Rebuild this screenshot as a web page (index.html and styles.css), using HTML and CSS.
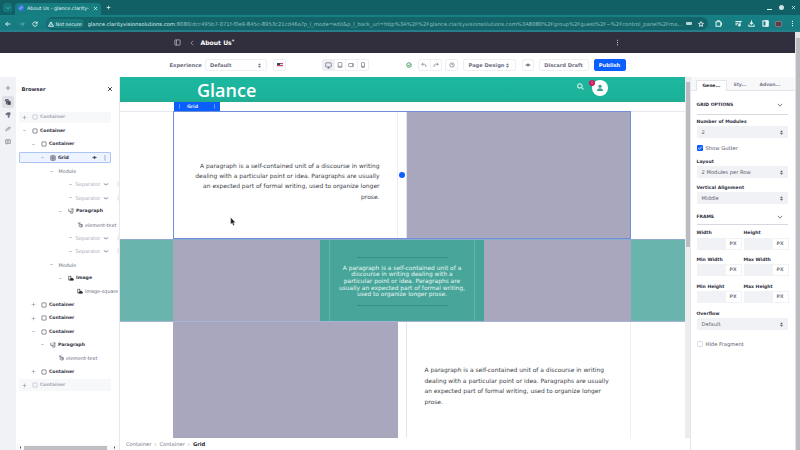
FILE: index.html
```html
<!DOCTYPE html>
<html lang="en">
<head>
<meta charset="utf-8">
<title>About Us - Page editor</title>
<link rel="stylesheet" href="styles.css">
</head>
<body>
<svg class="sprite" aria-hidden="true">
  <symbol id="plus" viewBox="0 0 8 8"><path d="M4 1v6M1 4h6"/></symbol>
  <symbol id="minus" viewBox="0 0 8 8"><path d="M2 4h4"/></symbol>
  <symbol id="close" viewBox="0 0 8 8"><path d="M1.5 1.5l5 5M6.5 1.5l-5 5"/></symbol>
  <symbol id="box" viewBox="0 0 8 8"><rect x="1.2" y="1.2" width="5.6" height="5.6" rx=".6"/></symbol>
  <symbol id="gridicon" viewBox="0 0 8 8"><rect x="1" y="1" width="6" height="6" rx=".6"/><path d="M3 1v6M5 1v6M1 4h6"/></symbol>
  <symbol id="para" viewBox="0 0 8 8"><path d="M1 1v3.5h2M3.5 1.3h3.8M6.5 1v5.8H3.6V4h2"/></symbol>
  <symbol id="txt" viewBox="0 0 8 8"><path d="M1 1.4h4M3 1.4v5.2M4 3.3h3v3.2H4M4.8 4.9H7"/></symbol>
  <symbol id="img" viewBox="0 0 8 8"><path d="M1 1v5.8h6.2"/><path d="M2.600 6.700L4 3.600l1.300 1.200.8-.8 1.300 2.700z" fill="currentColor"/><circle cx="3.200" cy="2.200" r=".6" fill="currentColor"/></symbol>
  <symbol id="eye" viewBox="0 0 8 8"><path d="M.8 4Q4 .9 7.200 4 4 7.100.8 4z"/><circle cx="4" cy="4" r="1.100" fill="currentColor"/></symbol>
  <symbol id="hidden" viewBox="0 0 8 8"><path d="M1 3.400q3 2.700 6 0M2 4.600l-.5.7M4 5v.8M6 4.600l.5.7"/></symbol>
  <symbol id="dots" viewBox="0 0 8 8"><path d="M4 .8v1.400M4 3.300v1.400M4 5.800v1.400"/></symbol>
  <symbol id="updown" viewBox="0 0 8 8"><path d="M1.700 3.400L4 .5l2.300 2.900zM1.700 4.600L4 7.500l2.300-2.900z" fill="currentColor" stroke="none"/></symbol>
  <symbol id="down" viewBox="0 0 8 8"><path d="M1 2.500l3 3 3-3"/></symbol>
  <symbol id="back" viewBox="0 0 8 8"><path d="M7.200 4H1M3.800 1.200L1 4l2.800 2.800"/></symbol>
  <symbol id="fwd" viewBox="0 0 8 8"><path d="M.8 4H7M4.200 1.200L7 4 4.200 6.800"/></symbol>
  <symbol id="reload" viewBox="0 0 8 8"><path d="M6.600 2.700A2.900 2.900 0 1 0 6.900 4.600M7 .8v2.300H4.700"/></symbol>
  <symbol id="warn" viewBox="0 0 8 8"><path d="M4 1.200L7.400 7H.6zM4 3.200v1.800M4 5.700v.5"/></symbol>
  <symbol id="star" viewBox="0 0 8 8"><path d="M4 .8l1 2.200 2.300.2-1.800 1.600.6 2.400L4 6 1.900 7.200l.6-2.400L.7 3.200 3 3z"/></symbol>
  <symbol id="ext" viewBox="0 0 8 8"><path d="M1.200 2h1.900V1h1.800v1h1.700v5.100H1.200zM6.600 3.700h.9v1.600h-.9"/></symbol>
  <symbol id="list" viewBox="0 0 8 8"><path d="M.5 1.600h4.600M.5 3.600h3.600M.5 5.400h2M5.800 6V1.600h1.800"/><circle cx="5" cy="6" r=".9" fill="currentColor"/></symbol>
  <symbol id="dl" viewBox="0 0 8 8"><path d="M4 .6v4M2.200 3L4 4.800 5.800 3M1 5v2.100h6V5"/></symbol>
  <symbol id="panel" viewBox="0 0 8 8"><rect x="1" y="1" width="6" height="6" rx=".5"/><path d="M4.600 1.300h2.200v5.400H4.600z" fill="currentColor"/></symbol>
  <symbol id="sidebar" viewBox="0 0 8 8"><rect x="1" y="1" width="6" height="6" rx=".5"/><path d="M2.800 1v6"/></symbol>
  <symbol id="left" viewBox="0 0 8 8"><path d="M5.500 1l-3 3 3 3"/></symbol>
  <symbol id="desktop" viewBox="0 0 8 8"><rect x=".8" y="1" width="6.400" height="4.600" rx=".6"/><path d="M2.700 7h2.600M4 5.600V7"/></symbol>
  <symbol id="tablet" viewBox="0 0 8 8"><rect x="1.400" y=".8" width="5.200" height="6.400" rx=".7"/><path d="M1.400 5.800h5.200"/></symbol>
  <symbol id="land" viewBox="0 0 8 8"><rect x=".8" y="2" width="6.400" height="4.200" rx=".7"/><path d="M5.900 2v4"/></symbol>
  <symbol id="phone" viewBox="0 0 8 8"><rect x="2" y=".8" width="4" height="6.400" rx=".7"/><path d="M2 5.900h4"/></symbol>
  <symbol id="okay" viewBox="0 0 8 8"><circle cx="4" cy="4" r="3"/><path d="M2.500 4l1.200 1.200 2.200-2.400"/></symbol>
  <symbol id="undo" viewBox="0 0 8 8"><path d="M3 1L1 3l2 2M1 3h3.600q2.200 0 2.200 3.600"/></symbol>
  <symbol id="redo" viewBox="0 0 8 8"><path d="M5 1l2 2-2 2M7 3H3.400Q1.200 3 1.200 6.600"/></symbol>
  <symbol id="clock" viewBox="0 0 8 8"><circle cx="4" cy="4" r="2.900"/><path d="M4 2.200V4h1.300"/></symbol>
  <symbol id="tree" viewBox="0 0 8 8"><path d="M.8 1h3.600v1.800H.8zM2.200 3v3.700h2M2.200 4.200h2M4.200 3.500h3v1.300h-3zM4.200 6h3v1.200h-3z"/></symbol>
  <symbol id="brush" viewBox="0 0 8 8"><path d="M1 2.600L3.200.9h3.600v2.800H3.400L1.600 3.900zM4.200 3.700h1.300v3.500H4.200z" fill="currentColor"/></symbol>
  <symbol id="link" viewBox="0 0 8 8"><path d="M3.300 4.800L2.200 6.600Q.6 6.400 1.300 4.800L3 3q1.400-.6 1.800.6M3.600 4.400Q4.800 5.500 5.700 4.200L7 2.500Q7 .9 5.400 1.200L4.300 2.400"/></symbol>
  <symbol id="comment" viewBox="0 0 8 8"><path d="M.9 1h6.200v4.800H3.600L2.200 7.100V5.800H.9zM2.400 2.700h3.200M2.400 4.100h2.300"/></symbol>
  <symbol id="search" viewBox="0 0 8 8"><circle cx="3.300" cy="3.300" r="2.500"/><path d="M5.100 5.100l2.300 2.300"/></symbol>
  <symbol id="user" viewBox="0 0 8 8"><circle cx="4" cy="2.300" r="1.600" fill="currentColor" stroke="none"/><path d="M1 7q0-2.800 3-2.800T7 7z" fill="currentColor" stroke="none"/></symbol>
</svg>

<header class="chrome">
  <div class="tabbar">
    <span class="tab-search"><svg class="i s4"><use href="#down"/></svg></span>
    <div class="tab"><span class="favicon"><svg class="i s4"><use href="#link"/></svg></span><span class="tab-title">About Us - glance.clarity-</span><svg class="i s5 bold"><use href="#close"/></svg></div>
    <svg class="i s5 bold newtab"><use href="#plus"/></svg>
    <div class="win"><span class="minimize"></span><span class="restore"></span><svg class="i s5 bold"><use href="#close"/></svg></div>
  </div>
  <div class="address">
    <svg class="i s6 bold"><use href="#back"/></svg>
    <svg class="i s6 dim"><use href="#fwd"/></svg>
    <svg class="i s6 bold"><use href="#reload"/></svg>
    <div class="omnibox">
      <span class="secure"><svg class="i s6 bold"><use href="#warn"/></svg>Not secure</span>
      <span class="url"><b>glance.clarityvisionsolutions.com</b>:8080/dcc495b7-071f-f0e9-845c-8953c21cd46a?p_l_mode=edit&amp;p_l_back_url=http%3A%2F%2Fglance.clarityvisionsolutions.com%3A8080%2Fgroup%2Fguest%2F~%2Fcontrol_panel%2Fma...</span>
      <span class="key"></span>
      <svg class="i s6 bold"><use href="#star"/></svg>
    </div>
    <div class="actions">
      <svg class="i s7 bold"><use href="#ext"/></svg>
      <svg class="i s7 bold media"><use href="#list"/></svg>
      <svg class="i s7 bold"><use href="#dl"/></svg>
      <svg class="i s7 bold"><use href="#panel"/></svg>
      <span class="profile"></span>
      <svg class="i s7 bold"><use href="#dots"/></svg>
    </div>
  </div>
</header>

<div class="page">
  <div class="app">
    <div class="titlebar">
      <svg class="i s7"><use href="#sidebar"/></svg>
      <svg class="i s6 chevron"><use href="#left"/></svg>
      <h1>About Us<sup>*</sup></h1>
      <svg class="i s7 more bold"><use href="#dots"/></svg>
    </div>
    <div class="toolbar">
      <span class="exp">Experience</span>
      <span class="btn select">Default<svg class="i s5"><use href="#updown"/></svg></span>
      <span class="btn lang"><span class="flag"></span></span>
      <div class="group devices"><span class="on"><svg class="i s7"><use href="#desktop"/></svg></span><span><svg class="i s6"><use href="#tablet"/></svg></span><span><svg class="i s6"><use href="#land"/></svg></span><span><svg class="i s6"><use href="#phone"/></svg></span></div>
      <svg class="i s6 status bold"><use href="#okay"/></svg>
      <div class="group history"><span><svg class="i s6"><use href="#undo"/></svg></span><span><svg class="i s6"><use href="#redo"/></svg></span></div>
      <span class="btn sq"><svg class="i s6"><use href="#clock"/></svg></span>
      <span class="btn design">Page Design<svg class="i s5"><use href="#updown"/></svg></span>
      <span class="btn sq eyebtn"><svg class="i s6"><use href="#eye"/></svg></span>
      <span class="btn discard">Discard Draft</span>
      <span class="btn publish">Publish</span>
    </div>

    <div class="workspace">
      <nav class="rail">
        <span><svg class="i s6"><use href="#plus"/></svg></span>
        <span class="on"><svg class="i s6 bold"><use href="#tree"/></svg></span>
        <span><svg class="i s6"><use href="#brush"/></svg></span>
        <span><svg class="i s6"><use href="#link"/></svg></span>
        <span><svg class="i s6"><use href="#comment"/></svg></span>
      </nav>

      <aside class="browser">
        <div class="browser-head"><h2>Browser</h2><svg class="i s6 bold"><use href="#close"/></svg></div>
        <ul class="tree">
          <li class="l0 muted shade"><svg class="i s5"><use href="#plus"/></svg><svg class="i s6 ic"><use href="#box"/></svg>Container</li>
          <li class="l0"><svg class="i s5"><use href="#minus"/></svg><svg class="i s6 ic"><use href="#box"/></svg>Container</li>
          <li class="l1"><svg class="i s5"><use href="#minus"/></svg><svg class="i s6 ic"><use href="#box"/></svg>Container</li>
          <li class="l2 selected"><svg class="i s5"><use href="#minus"/></svg><svg class="i s6 ic"><use href="#gridicon"/></svg>Grid<svg class="i s5 seleye"><use href="#eye"/></svg><svg class="i s6 seldots"><use href="#dots"/></svg></li>
          <li class="l3 plain"><svg class="i s5"><use href="#minus"/></svg><span class="module">Module</span></li>
          <li class="l5 muted"><svg class="i s5"><use href="#minus"/></svg><span class="sep">Separator</span><svg class="i s6 hid"><use href="#hidden"/></svg><svg class="i s6 edge"><use href="#dots"/></svg></li>
          <li class="l5 muted"><svg class="i s5"><use href="#minus"/></svg><span class="sep">Separator</span><svg class="i s6 hid"><use href="#hidden"/></svg><svg class="i s6 edge"><use href="#dots"/></svg></li>
          <li class="l4"><svg class="i s5"><use href="#minus"/></svg><svg class="i s6 ic"><use href="#para"/></svg>Paragraph</li>
          <li class="l5 plain"><i class="gap"></i><svg class="i s6 ic"><use href="#txt"/></svg>element-text</li>
          <li class="l5 muted"><svg class="i s5"><use href="#minus"/></svg><span class="sep">Separator</span><svg class="i s6 hid"><use href="#hidden"/></svg><svg class="i s6 edge"><use href="#dots"/></svg></li>
          <li class="l5 muted"><svg class="i s5"><use href="#minus"/></svg><span class="sep">Separator</span><svg class="i s6 hid"><use href="#hidden"/></svg><svg class="i s6 edge"><use href="#dots"/></svg></li>
          <li class="l3 plain"><svg class="i s5"><use href="#minus"/></svg><span class="module">Module</span></li>
          <li class="l4"><svg class="i s5"><use href="#minus"/></svg><svg class="i s6 ic dark"><use href="#img"/></svg>Image</li>
          <li class="l5 plain"><i class="gap"></i><svg class="i s6 ic dark"><use href="#img"/></svg>image-square</li>
          <li class="l1"><svg class="i s5"><use href="#plus"/></svg><svg class="i s6 ic"><use href="#box"/></svg>Container</li>
          <li class="l1"><svg class="i s5"><use href="#plus"/></svg><svg class="i s6 ic"><use href="#box"/></svg>Container</li>
          <li class="l1"><svg class="i s5"><use href="#minus"/></svg><svg class="i s6 ic"><use href="#box"/></svg>Container</li>
          <li class="l2"><svg class="i s5"><use href="#minus"/></svg><svg class="i s6 ic"><use href="#para"/></svg>Paragraph</li>
          <li class="l3 plain"><i class="gap"></i><svg class="i s6 ic"><use href="#txt"/></svg>element-text</li>
          <li class="l1"><svg class="i s5"><use href="#plus"/></svg><svg class="i s6 ic"><use href="#box"/></svg>Container</li>
          <li class="l0 muted shade"><svg class="i s5"><use href="#plus"/></svg><svg class="i s6 ic"><use href="#box"/></svg>Container</li>
        </ul>
        <div class="hscroll"><i class="arr l"></i><i class="thumb"></i><i class="arr r"></i></div>
      </aside>

      <main class="canvas">
        <div class="site-head">
          <span class="logo">Glance</span>
          <svg class="i s7 bold find"><use href="#search"/></svg>
          <span class="avatar"><svg class="i s8"><use href="#user"/></svg><span class="badge">1</span></span>
        </div>
        <div class="tagrow"><span class="tag"><svg class="i s5 bold"><use href="#dots"/></svg><b>Grid</b><svg class="i s5 bold"><use href="#dots"/></svg></span></div>
        <section class="row first">
          <div class="grid-box">
            <div class="module-text"><p>A paragraph is a self-contained unit of a discourse in writing<br>dealing with a particular point or idea. Paragraphs are usually<br>an expected part of formal writing, used to organize longer<br>prose.</p></div>
            <div class="gutter"><span class="handle"></span></div>
            <div class="module-image"></div>
          </div>
          <svg class="cursor" viewBox="0 0 6 9"><path d="M.7.5v6.700l1.500-1.300 1 2.500 1.200-.5-1-2.300h2z"/></svg>
        </section>
        <section class="band">
          <div class="cell"></div>
          <div class="callout"><div class="callout-in"><hr><p>A paragraph is a self-contained unit of a<br>discourse in writing dealing with a<br>particular point or idea. Paragraphs are<br>usually an expected part of formal writing,<br>used to organize longer prose.</p><hr></div></div>
          <div class="cell"></div>
        </section>
        <section class="row third">
          <div class="module-image"></div>
          <div class="gutter"></div>
          <div class="module-text"><p>A paragraph is a self-contained unit of a discourse in writing<br>dealing with a particular point or idea. Paragraphs are usually<br>an expected part of formal writing, used to organize longer<br>prose.</p></div>
        </section>
        <footer class="crumbs"><span>Container</span><em>›</em><span>Container</span><em>›</em><b>Grid</b></footer>
      </main>
      <div class="canvas-scroll"><i></i></div>

      <aside class="props">
        <div class="tabs"><span class="on">Gene...</span><span>Sty...</span><span>Advan...</span></div>
        <div class="props-body">
          <h3 class="first-h">GRID OPTIONS<svg class="i s6"><use href="#down"/></svg></h3>
          <label>Number of Modules</label>
          <div class="field">2<svg class="i s5"><use href="#updown"/></svg></div>
          <div class="check"><span class="box on"><svg class="i s6"><path d="M1.200 3l1.300 1.300L4.800 1.700"/></svg></span>Show Gutter</div>
          <label>Layout</label>
          <div class="field">2 Modules per Row<svg class="i s5"><use href="#updown"/></svg></div>
          <label class="valign">Vertical Alignment</label>
          <div class="field">Middle<svg class="i s5"><use href="#updown"/></svg></div>
          <h3 class="frame">FRAME<svg class="i s6"><use href="#down"/></svg></h3>
          <div class="dims">
            <div><label>Width</label><div class="unit"><i></i><b>PX</b></div></div>
            <div><label>Height</label><div class="unit"><i></i><b>PX</b></div></div>
            <div><label>Min Width</label><div class="unit"><i></i><b>PX</b></div></div>
            <div><label>Max Width</label><div class="unit"><i></i><b>PX</b></div></div>
            <div><label>Min Height</label><div class="unit"><i></i><b>PX</b></div></div>
            <div><label>Max Height</label><div class="unit"><i></i><b>PX</b></div></div>
          </div>
          <label>Overflow</label>
          <div class="field">Default<svg class="i s5"><use href="#updown"/></svg></div>
          <div class="check hide"><span class="box"></span>Hide Fragment</div>
        </div>
      </aside>
    </div>
  </div>
  <div class="page-scroll"><i></i></div>
</div>
</body>
</html>
```
FILE: styles.css
```css
* { box-sizing: border-box; }
body {
  margin: 0;
  width: 800px;
  height: 450px;
  overflow: hidden;
  display: flex;
  flex-direction: column;
  background: #fff;
  color: #30313f;
  font: 5.4px/8px "DejaVu Sans", sans-serif;
}
h1, h2, h3, p, ul { margin: 0; padding: 0; }
.sprite { position: absolute; width: 0; height: 0; }
.i { fill: none; stroke: currentColor; stroke-width: .85; flex: none; display: block; }
.i.bold { stroke-width: 1.2; }
.s4 { width: 4px; height: 4px; }
.s5 { width: 5px; height: 5px; }
.s6 { width: 6px; height: 6px; }
.s7 { width: 7px; height: 7px; }
.s8 { width: 8px; height: 8px; }

/* browser chrome */
.chrome { flex: none; height: 32px; color: #e4f3f3; }
.tabbar { height: 15px; background: #116066; display: flex; align-items: center; padding-left: 3px; }
.tab-search { width: 9px; height: 9px; border-radius: 3px; background: #14777c; display: grid; place-items: center; }
.tab { width: 86px; height: 12px; margin: 3px 0 0 3px; padding: 0 3px 2px; border-radius: 4px 4px 0 0; background: #167d81; display: flex; align-items: center; }
.favicon { flex: none; width: 6px; height: 6px; border-radius: 2px; background: #3476dc; display: grid; place-items: center; }
.tab-title { margin-left: 3px; width: 66px; white-space: nowrap; overflow: hidden; font-size: 4.900px; }
.newtab { margin-left: 5px; }
.win { margin-left: auto; padding-right: 4px; display: flex; align-items: center; gap: 7px; }
.minimize { width: 5px; height: 1px; margin-top: 4px; background: #e4f3f3; }
.restore { width: 5px; height: 5px; border-radius: 3px; background: #cbe3e3; }
.address { height: 17px; background: linear-gradient(#178084, #167b80 80%, #2b7f8d); display: flex; align-items: center; padding-left: 5px; gap: 7.5px; }
.dim { opacity: .5; }
.omnibox { flex: none; width: 662px; height: 13px; border-radius: 7px; background: #126468; display: flex; align-items: center; padding: 0 5px 0 1px; }
.secure { flex: none; width: 37px; height: 9px; margin-right: 4px; border-radius: 5px; background: #17787c; display: flex; align-items: center; gap: 2px; padding-left: 1px; font-size: 4.900px; white-space: nowrap; }
.url { flex: none; width: 596px; overflow: hidden; white-space: nowrap; color: #8fbec0; font-size: 5.270px; }
.url b { font-weight: 400; color: #d9eeee; }
.key { width: 6px; height: 3px; margin: 0 6px 0 2px; border-radius: 1px; background: #b5d5d6; flex: none; }
.actions { display: flex; align-items: center; gap: 6.500px; }
.media { margin-left: 6px; }
.profile { width: 7px; height: 6px; background: #50404d; border: 1px solid #8b7378; border-radius: 1px; }

.page { flex: 1; display: flex; min-height: 0; }
.app { width: 795px; display: flex; flex-direction: column; min-height: 0; }
.page-scroll { width: 5px; background: #e4e4e6; padding: 6px .5px 0; }
.page-scroll i { display: block; height: 100%; background: #bcbcc0; }

/* title and toolbar */
.titlebar { flex: none; height: 21px; background: #312f3e; color: #bdbcc7; display: flex; align-items: center; padding-left: 173.500px; }
.chevron { margin-left: 8px; }
.titlebar h1 { margin-left: 6px; font-size: 6.100px; line-height: 8px; color: #fff; width: 37px; white-space: nowrap; }
.titlebar sup { font-size: 5px; line-height: 0; vertical-align: 2px; }
.more { margin-left: 376px; }
.toolbar { flex: none; height: 24px; display: flex; align-items: center; color: #6b6c7e; font-weight: 700; white-space: nowrap; }
.exp { margin-left: 169.500px; width: 35.500px; font-size: 5.200px; }
.btn { height: 12px; border: 1px solid #eeeff3; border-radius: 2px; display: flex; align-items: center; justify-content: center; font-size: 5.150px; }
.select { width: 62px; padding: 0 4px; justify-content: space-between; }
.lang { margin-left: 6px; width: 13px; }
.flag { width: 6px; height: 4px; background: linear-gradient(#34457e, #34457e) 0 0 / 3px 2px no-repeat, repeating-linear-gradient(#c9465a 0 1px, #f2dada 1px 2px); }
.group { display: flex; height: 12px; border: 1px solid #eeeff3; border-radius: 2px; }
.group span { flex: 1; display: grid; place-items: center; border-left: 1px solid #f1f2f5; }
.group span:first-child { border-left: 0; }
.group .on { background: #eeeff2; }
.devices { margin-left: 36px; width: 47px; }
.status { margin-left: 37px; color: #3d9a62; }
.history { margin-left: 6px; width: 24px; }
.sq { width: 13px; margin-left: 3px; }
.design { width: 53px; margin-left: 5px; gap: 1px; }
.eyebtn { margin-left: 6px; width: 12px; }
.discard { margin-left: 4.500px; width: 50px; }
.publish { margin-left: 5px; width: 32px; border-color: #0b5fff; background: #0b5fff; color: #fff; }

.workspace { flex: 1; display: flex; min-height: 0; }
.rail { width: 16px; background: #f1f2f5; padding-top: 5.500px; color: #6b6c7e; }
.rail span { width: 12px; height: 11.500px; margin: 0 0 2px 2px; border-radius: 2px; display: grid; place-items: center; }
.rail .on { background: #dfe0e5; color: #393a4a; }

/* browser tree */
.browser { width: 104px; border-right: 1px solid #e7e8ef; display: flex; flex-direction: column; overflow: hidden; position: relative; }
.browser-head { height: 33.800px; padding: 8px 6px 0 5.500px; display: flex; justify-content: space-between; }
.browser-head h2 { font-size: 5.200px; line-height: 8px; }
.browser-head .i { margin-top: 1px; }
.tree { list-style: none; flex: 1; }
.tree li { height: 13.380px; display: flex; align-items: center; position: relative; white-space: nowrap; font-weight: 700; font-size: 4.600px; }
.tree li > .i:first-child { color: #8b8c9b; }
.ic { margin: 0 2px 0 5.500px; color: #4e4f60; }
.l0 { padding-left: 5.500px; }
.l1 { padding-left: 14.500px; }
.l2 { padding-left: 23.500px; }
.l3 { padding-left: 32.500px; }
.l4 { padding-left: 41.500px; }
.tree .l5 { padding-left: 51.500px; }
.tree .muted { color: #a9aab6; }
.tree .muted .ic { color: #b9bac4; }
.tree .shade { background: #f7f8fa; width: 92px; height: 11.400px; margin: 1px 0 1px 3px; padding-left: 2.500px; }
.tree .plain { font-weight: 400; color: #6b6c7e; font-size: 4.850px; }
.tree .plain .ic { margin-left: 4.500px; }
.tree .selected { width: 92px; height: 11.400px; margin: 1px 0 1px 3px; padding-left: 19.500px; background: #edf3ff; border: 1px solid #abc4f4; border-radius: 1px; }
.tree .dark { color: #272833; }
.gap { width: 5px; }
.module { margin-left: 5px; }
.sep { margin-left: 3px; width: 27px; font-weight: 400; font-size: 5.050px; }
.hid { margin-left: 3px; color: #77788a; }
.edge { margin-left: 6px; }
.seleye { margin-left: auto; }
.seldots { margin: 0 2px 0 5px; }
.hscroll { height: 5px; background: #fafafb; display: flex; align-items: center; padding: 0 2px; gap: 3px; }
.thumb { flex: 1; height: 4px; background: #bfbfc3; margin: 0 4px 0 0; }
.arr { border: 1.500px solid transparent; width: 3px; height: 3px; }
.arr.l { border-right-color: #555; border-left: 0; }
.arr.r { border-left-color: #555; border-right: 0; }

/* page canvas */
.canvas { width: 565px; display: flex; flex-direction: column; }
.site-head { height: 25px; background: linear-gradient(#1db79f, #1bb39a 85%, #25ab92); display: flex; align-items: center; padding-left: 77px; color: #fff; }
.logo { width: 380px; font: 600 18px/20px "Open Sans", sans-serif; }
.find { margin-bottom: 7px; color: #d5f3ec; }
.avatar { width: 16px; height: 16px; margin: 0 0 3px 8px; border-radius: 8px; background: #fff; color: #35a28f; display: grid; place-items: center; position: relative; }
.badge { position: absolute; left: -3px; top: 0; width: 6px; height: 6px; border-radius: 3px; background: #cc1857; color: #f0b5ca; font-size: 4px; line-height: 6px; text-align: center; }
.tagrow { height: 9px; padding-left: 53.500px; }
.tag { width: 46px; height: 9px; background: #0b5fff; color: #dce7ff; display: flex; align-items: center; justify-content: space-between; padding: 0 3px; font-size: 4.700px; }
.tag b { margin-right: 8px; }
.row { border-top: 1px solid #e7e8ef; padding: 0 54px 0 53px; }
.first { height: 128px; position: relative; }
.grid-box { height: 128px; margin-top: -1px; border: 1.500px solid #6f8fdc; display: flex; }
.module-text p { color: #3a3b45; font-size: 5.960px; line-height: 10.400px; white-space: nowrap; }
.first .module-text { width: 224px; border-right: 1px solid #eeeff6; padding: 48.500px 17.500px 0 0; }
.first .module-text p { text-align: right; }
.gutter { width: 9px; border-right: 1px solid #e3e6f2; display: grid; place-items: center; }
.first .module-image { flex: 1; }
.module-image { background: #a8a7bd; }
.handle { width: 6px; height: 6px; border-radius: 3px; background: #0b5fff; }
.cursor { position: absolute; left: 110px; top: 105px; width: 6px; height: 9px; fill: #191919; stroke: #ddd; stroke-width: .4; }
.band { height: 83px; padding: 0 54px 0 53px; background: #6ab4ae; display: flex; border-top: 1px solid #8eabc9; border-bottom: 1px solid #a9b3d5; }
.cell { width: 147px; background: #a8a7bd; }
.callout { width: 164px; background: #48a59a; padding: 0 9px; }
.callout-in { height: 100%; padding-top: 16.500px; border: solid #66b3a9; border-width: 0 1px; text-align: center; color: #e4f5f2; }
.callout hr { width: 91px; height: 1.500px; margin: 0 auto; border: 0; background: #2d9384; }
.callout p { margin: 6.500px -2px 6.500px; font-size: 5.920px; line-height: 6.720px; white-space: nowrap; }
.third { height: 116px; display: flex; border-top: 0; }
.third .module-image { width: 225px; }
.third .module-text { flex: 1; border-right: 1px solid #eeeff6; padding: 43.300px 0 0 17.500px; }
.crumbs { flex: 1; display: flex; gap: 3px; padding: 2px 0 0 6px; font-size: 5.200px; color: #77788a; }
.crumbs em { font-style: normal; }
.crumbs b { color: #272833; }
.canvas-scroll { width: 5px; height: 361px; padding: 5px .5px 0; background: #ededf0; }
.canvas-scroll i { display: block; height: 165px; background: #bcbcc0; }

/* properties */
.props { width: 105px; border-left: 1px solid #e7e8ef; }
.tabs { height: 14px; display: flex; background: #f8f8fa; border-bottom: 1px solid #e4e5eb; padding: 3px 0 0 5px; font-weight: 700; font-size: 4.500px; color: #77788a; }
.tabs span { height: 11px; text-align: center; line-height: 10px; }
.tabs span:nth-child(2) { width: 26px; }
.tabs span:nth-child(3) { width: 34px; }
.tabs .on { width: 31px; background: #fff; border: 1px solid #e4e5eb; border-bottom: 0; color: #272833; line-height: 9px; }
.props-body { padding: 0 7px 0 5.500px; }
.props h3 { display: flex; justify-content: space-between; align-items: center; padding-right: 5px; font-size: 4.500px; line-height: 8px; border-bottom: 1px solid #d6d7df; }
.props h3.first-h { margin: 10.200px 0 3px; height: 14px; padding-bottom: 5px; }
.props h3.frame { margin: 9px 0 4.300px; height: 12px; padding-bottom: 3px; }
.props label { display: block; font-size: 4.550px; line-height: 8px; font-weight: 700; white-space: nowrap; }
.field { height: 12px; margin-top: .2px; padding: 0 4px 0 5px; border-radius: 1px; background: #f1f2f5; display: flex; align-items: center; justify-content: space-between; font-size: 5.200px; color: #5c5d6e; white-space: nowrap; }
.check { display: flex; align-items: center; gap: 3px; height: 8px; margin: 5.800px 0; font-size: 5.200px; color: #5c5d6e; white-space: nowrap; }
.box { width: 6px; height: 6px; border: 1px solid #e0e1e8; border-radius: 1px; }
.box.on { background: #0b5fff; border: 0; color: #fff; }
.props label.valign { margin-top: 5.800px; }
.dims { display: grid; grid-template-columns: 45px 45px; column-gap: 2px; }
.dims > div { height: 26.800px; }
.unit { display: flex; height: 12px; margin-top: .2px; border: 1px solid #f1f2f5; }
.unit i { width: 28px; background: #f1f2f5; }
.unit b { flex: 1; text-align: center; line-height: 10px; font-size: 4.700px; color: #77788a; }
.props .hide { margin-top: 9.500px; }
```
